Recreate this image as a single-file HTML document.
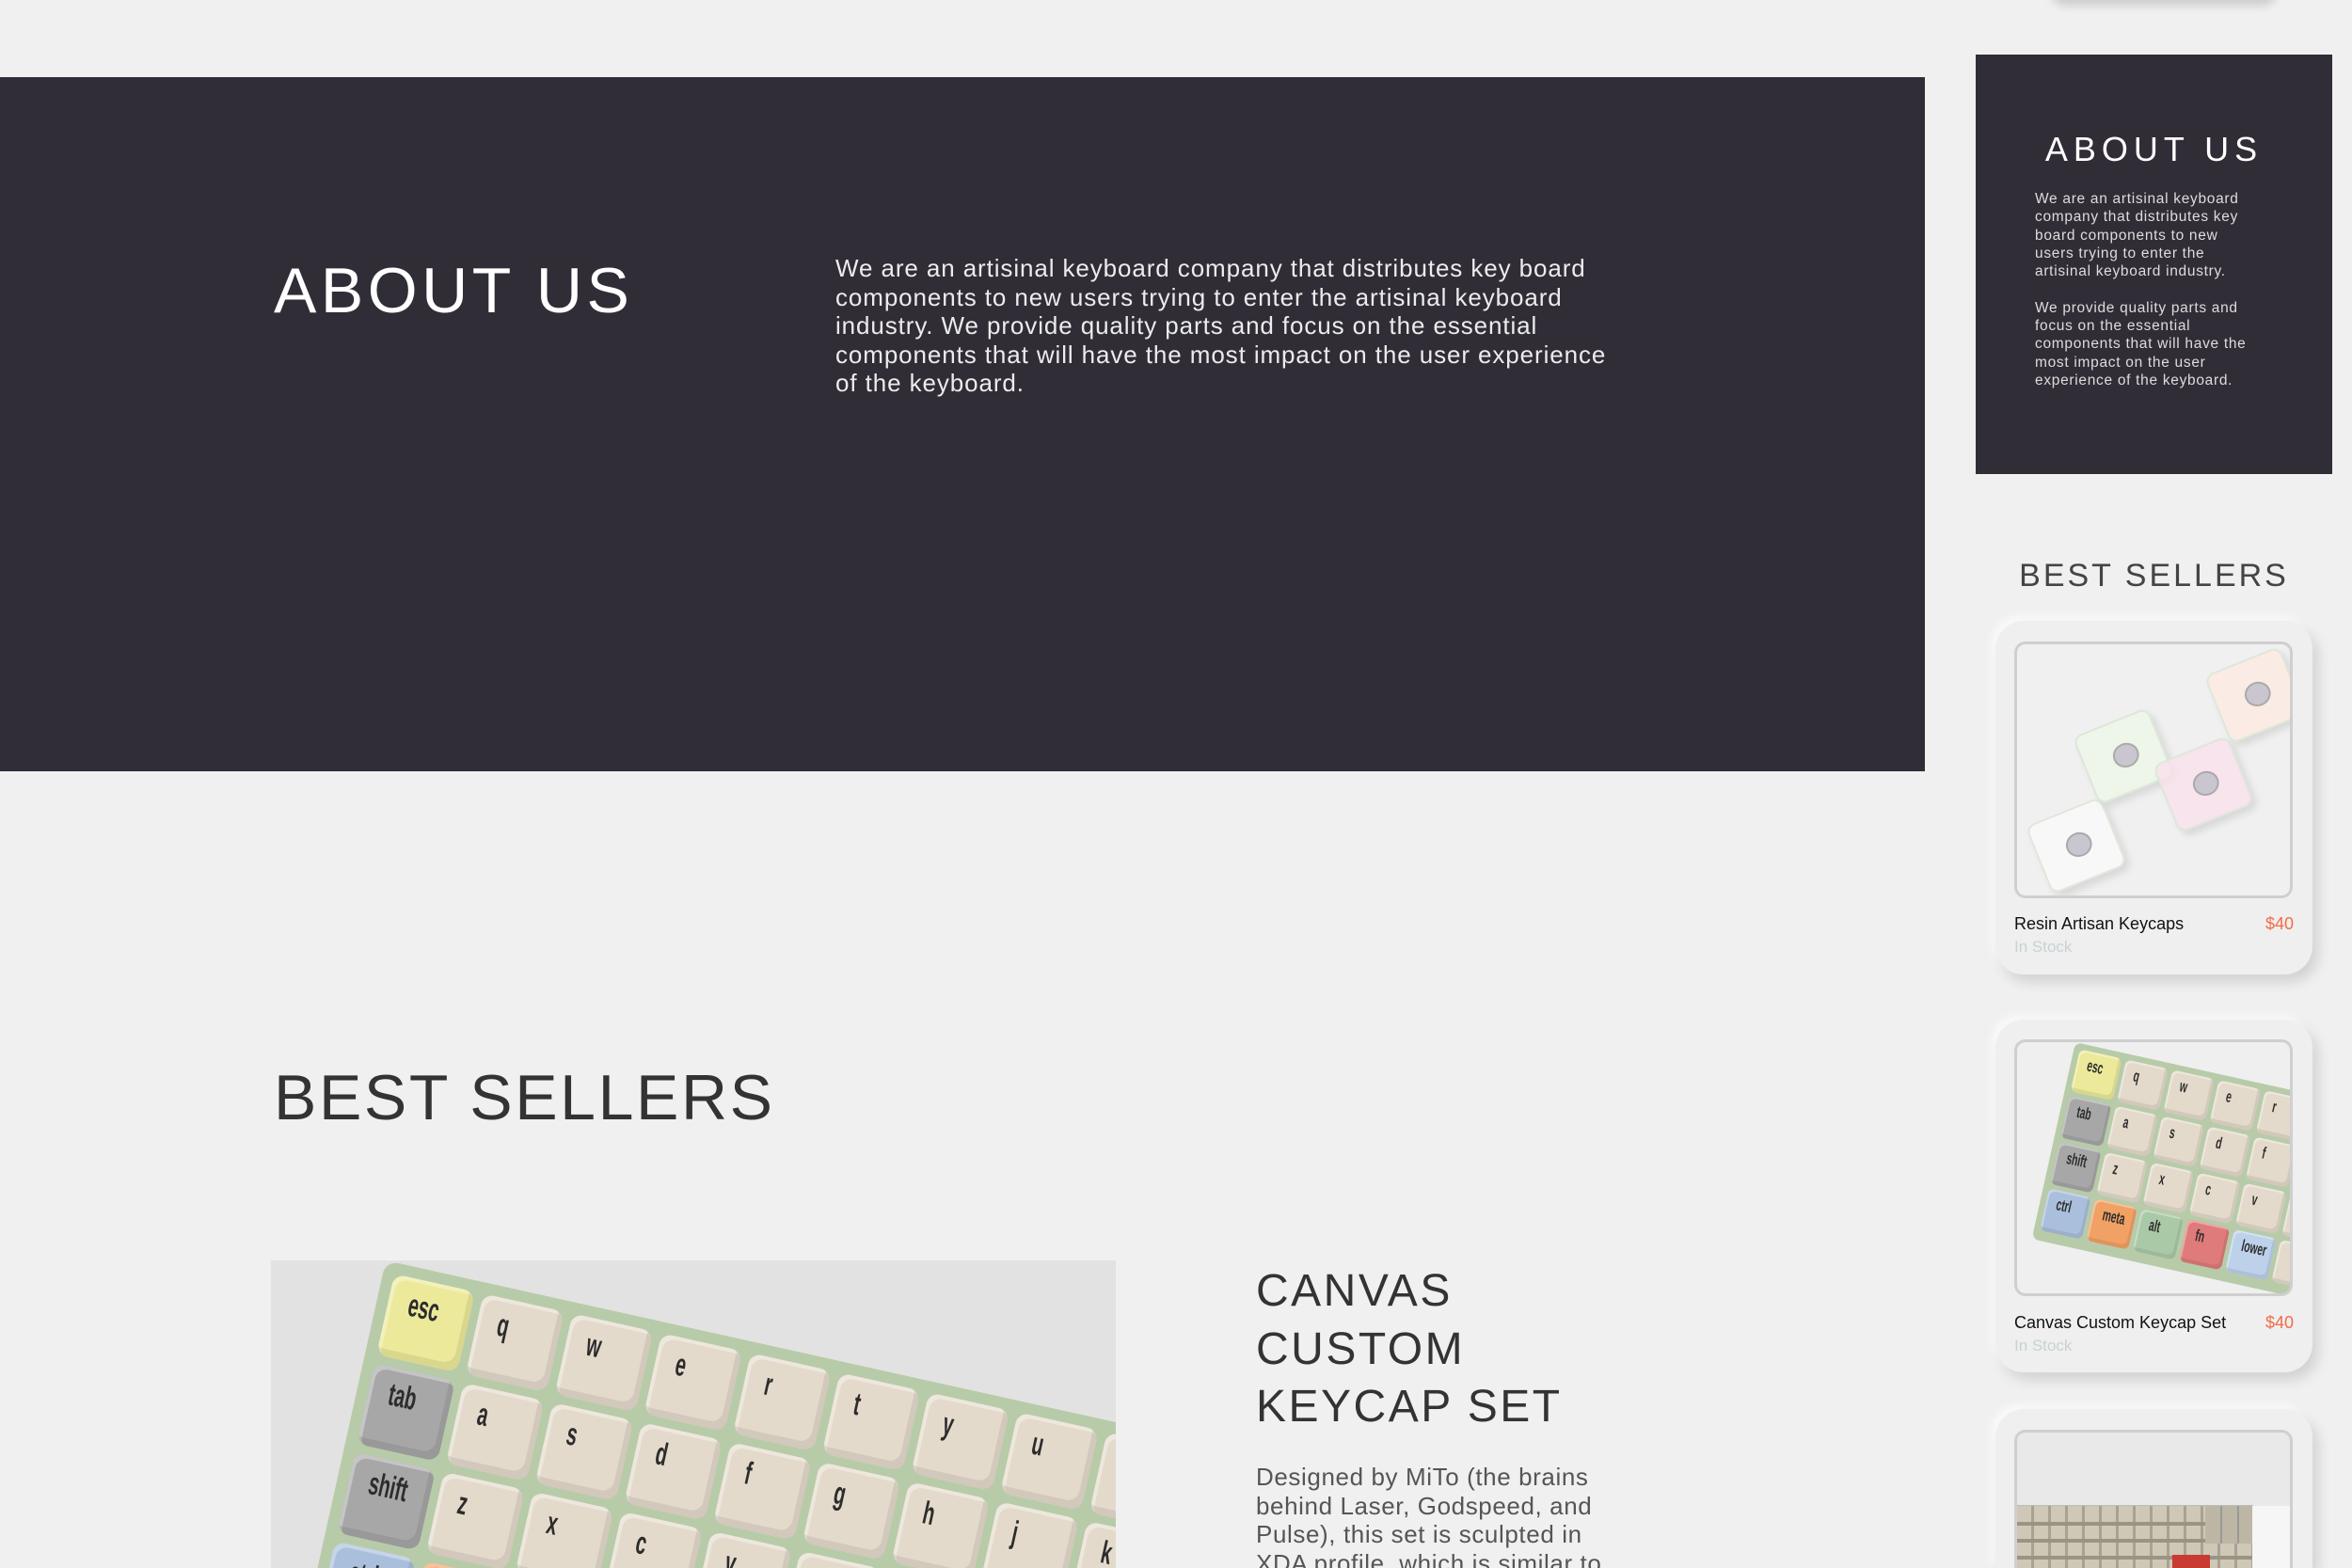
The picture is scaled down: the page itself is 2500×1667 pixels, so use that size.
<!DOCTYPE html>
<html style="overflow:hidden"><head><meta charset="utf-8"><style>
*{margin:0;padding:0;box-sizing:border-box}
body{width:2500px;height:1667px;background:#f0f0f0;position:relative;overflow:hidden;font-family:"Liberation Sans",sans-serif}
.abs{position:absolute}
.band{left:0;top:82px;width:2046px;height:738px;background:#302d37}
.h1{font-size:68px;letter-spacing:4.5px;font-weight:400;white-space:nowrap}
.kb{position:absolute;transform-origin:0 0;background:#b7cba9;border-radius:14px;padding:12px;width:1200px}
.row{display:flex;gap:9px;margin-bottom:9px}
.k{width:88px;height:88px;border-radius:12px;background:#e4dacb;box-shadow:inset -6px -8px 0 rgba(0,0,0,.08),inset 4px 4px 0 rgba(255,255,255,.35);position:relative;flex:none}
.k span{position:absolute;left:22px;top:10px;font-size:34px;font-weight:bold;color:#2c2c2c;transform:scaleX(.58);transform-origin:0 0;font-family:"Liberation Sans Narrow","Liberation Sans",sans-serif}
.y{background:#ecea9a}.g{background:#a7a7a7}.b{background:#aabfdc}.o{background:#f1a164}.gr{background:#aac9a6}.r{background:#e07b7b}.lb{background:#bdd1ea}
.card{left:2121px;width:337px;background:#efefef;border-radius:30px;box-shadow:6px 8px 14px rgba(0,0,0,.13),-4px -4px 10px rgba(255,255,255,.8)}
.img{position:absolute;left:20px;width:296px;border:3px solid #cfcfcf;border-radius:12px;overflow:hidden;background:#efefef}
.t{position:absolute;left:20px;font-size:18px;color:#111}
.p{position:absolute;right:20px;font-size:18px;color:#f26b4a}
.s{position:absolute;left:20px;font-size:17px;color:#c8d2d4}
.cap{position:absolute;width:86px;height:78px;border-radius:10px;background:rgba(255,255,255,.55);border:2px solid rgba(220,230,215,.9);box-shadow:3px 6px 8px rgba(0,0,0,.1)}
.cap:after{content:"";position:absolute;left:30px;top:24px;width:24px;height:22px;border-radius:50%;background:#c9c6cf;border:2px solid #aaa}
</style></head><body>

<div class="abs band"></div>
<div class="abs h1" style="left:291px;top:270px;color:#fff">ABOUT US</div>
<div class="abs" style="left:888px;top:270px;width:850px;font-size:26px;line-height:30.6px;color:#ececec;letter-spacing:.9px">We are an artisinal keyboard company that distributes key board components to new users trying to enter the artisinal keyboard industry. We provide quality parts and focus on the essential components that will have the most impact on the user experience of the keyboard.</div>

<div class="abs h1" style="left:291px;top:1128px;color:#333;letter-spacing:2.6px">BEST SELLERS</div>

<div class="abs" style="left:288px;top:1340px;width:898px;height:327px;background:#e2e2e2;overflow:hidden">
 <div class="kb" style="left:122px;top:0px;transform:rotate(12.5deg)">
  <div class="row"><div class="k y"><span>esc</span></div><div class="k"><span>q</span></div><div class="k"><span>w</span></div><div class="k"><span>e</span></div><div class="k"><span>r</span></div><div class="k"><span>t</span></div><div class="k"><span>y</span></div><div class="k"><span>u</span></div><div class="k"><span>i</span></div><div class="k"><span>o</span></div></div>
  <div class="row"><div class="k g"><span>tab</span></div><div class="k"><span>a</span></div><div class="k"><span>s</span></div><div class="k"><span>d</span></div><div class="k"><span>f</span></div><div class="k"><span>g</span></div><div class="k"><span>h</span></div><div class="k"><span>j</span></div><div class="k"><span>k</span></div><div class="k"><span>l</span></div></div>
  <div class="row"><div class="k g"><span>shift</span></div><div class="k"><span>z</span></div><div class="k"><span>x</span></div><div class="k"><span>c</span></div><div class="k"><span>v</span></div><div class="k"><span>b</span></div><div class="k"><span>n</span></div><div class="k"><span>m</span></div><div class="k"><span>,</span></div><div class="k"><span>.</span></div></div>
  <div class="row"><div class="k b"><span>ctrl</span></div><div class="k o"><span>meta</span></div><div class="k gr"><span>alt</span></div><div class="k r"><span>fn</span></div><div class="k lb"><span>lower</span></div><div class="k"></div><div class="k"></div><div class="k"></div><div class="k"></div><div class="k"></div></div>
 </div>
</div>

<div class="abs" style="left:1335px;top:1342px;font-size:48px;line-height:61.5px;letter-spacing:2.5px;color:#333">CANVAS<br>CUSTOM<br>KEYCAP SET</div>
<div class="abs" style="left:1335px;top:1555px;white-space:nowrap;font-size:26px;line-height:30.6px;color:#555;letter-spacing:.6px;height:112px;overflow:hidden">Designed by MiTo (the brains<br>behind Laser, Godspeed, and<br>Pulse), this set is sculpted in<br>XDA profile, which is similar to<br>DSA with uniform height for</div>

<!-- right panel -->
<div class="abs" style="left:2180px;top:-30px;width:240px;height:30px;border-radius:20px;box-shadow:0 6px 10px rgba(0,0,0,.15)"></div>
<div class="abs" style="left:2100px;top:58px;width:379px;height:446px;background:#302d37"></div>
<div class="abs" style="left:2100px;top:138px;width:379px;text-align:center;font-size:36px;letter-spacing:6px;color:#fff">ABOUT US</div>
<div class="abs" style="left:2163px;top:202px;white-space:nowrap;font-size:15.5px;line-height:19.3px;color:#ddd;letter-spacing:.7px">We are an artisinal keyboard<br>company that distributes key<br>board components to new<br>users trying to enter the<br>artisinal keyboard industry.<br><br>We provide quality parts and<br>focus on the essential<br>components that will have the<br>most impact on the user<br>experience of the keyboard.</div>
<div class="abs" style="left:2100px;top:593px;width:379px;text-align:center;font-size:34px;letter-spacing:3px;color:#444">BEST SELLERS</div>

<div class="abs card" style="top:660px;height:376px">
 <div class="img" style="top:22px;height:273px;background:#f0f0f0">
  <div class="cap" style="left:20px;top:175px;transform:rotate(-22deg)"></div>
  <div class="cap" style="left:70px;top:80px;transform:rotate(-22deg);background:rgba(235,248,230,.7)"></div>
  <div class="cap" style="left:155px;top:110px;transform:rotate(-22deg);background:rgba(250,225,235,.8)"></div>
  <div class="cap" style="left:210px;top:15px;transform:rotate(-22deg);background:rgba(252,235,225,.8)"></div>
 </div>
 <div class="t" style="top:312px">Resin Artisan Keycaps</div>
 <div class="p" style="top:312px">$40</div>
 <div class="s" style="top:337px">In Stock</div>
</div>

<div class="abs card" style="top:1084px;height:375px">
 <div class="img" style="top:21px;height:273px">
  <div class="kb" style="left:62px;top:0px;transform:rotate(12.5deg) scale(.52)">
   <div class="row"><div class="k y"><span>esc</span></div><div class="k"><span>q</span></div><div class="k"><span>w</span></div><div class="k"><span>e</span></div><div class="k"><span>r</span></div><div class="k"><span>t</span></div></div>
   <div class="row"><div class="k g"><span>tab</span></div><div class="k"><span>a</span></div><div class="k"><span>s</span></div><div class="k"><span>d</span></div><div class="k"><span>f</span></div><div class="k"><span>g</span></div></div>
   <div class="row"><div class="k g"><span>shift</span></div><div class="k"><span>z</span></div><div class="k"><span>x</span></div><div class="k"><span>c</span></div><div class="k"><span>v</span></div><div class="k"><span>b</span></div></div>
   <div class="row"><div class="k b"><span>ctrl</span></div><div class="k o"><span>meta</span></div><div class="k gr"><span>alt</span></div><div class="k r"><span>fn</span></div><div class="k lb"><span>lower</span></div><div class="k"></div></div>
  </div>
 </div>
 <div class="t" style="top:312px">Canvas Custom Keycap Set</div>
 <div class="p" style="top:312px">$40</div>
 <div class="s" style="top:337px">In Stock</div>
</div>

<div class="abs card" style="top:1498px;height:169px;border-radius:30px 30px 0 0;overflow:hidden">
 <div class="img" style="top:22px;height:160px;background:#e9e9e9">
  <div class="abs" style="left:0;top:78px;width:250px;height:100px;background:repeating-linear-gradient(90deg,#cfc8b6 0 15px,#a9a292 15px 18px),#cfc8b6;box-shadow:0 0 0 1px #bbb"></div>
  <div class="abs" style="left:0;top:95px;width:250px;height:4px;background:#9a9484"></div>
  <div class="abs" style="left:0;top:113px;width:250px;height:4px;background:#9a9484"></div>
  <div class="abs" style="left:0;top:131px;width:250px;height:4px;background:#9a9484"></div>
  <div class="abs" style="left:165px;top:130px;width:40px;height:15px;background:#c83a32"></div>
  <div class="abs" style="left:200px;top:78px;width:60px;height:40px;background:repeating-linear-gradient(90deg,#bdb6a4 0 16px,#999 16px 18px)"></div>
  <div class="abs" style="left:250px;top:78px;width:42px;height:82px;background:#f6f6f6"></div>
 </div>
</div>
</body></html>
